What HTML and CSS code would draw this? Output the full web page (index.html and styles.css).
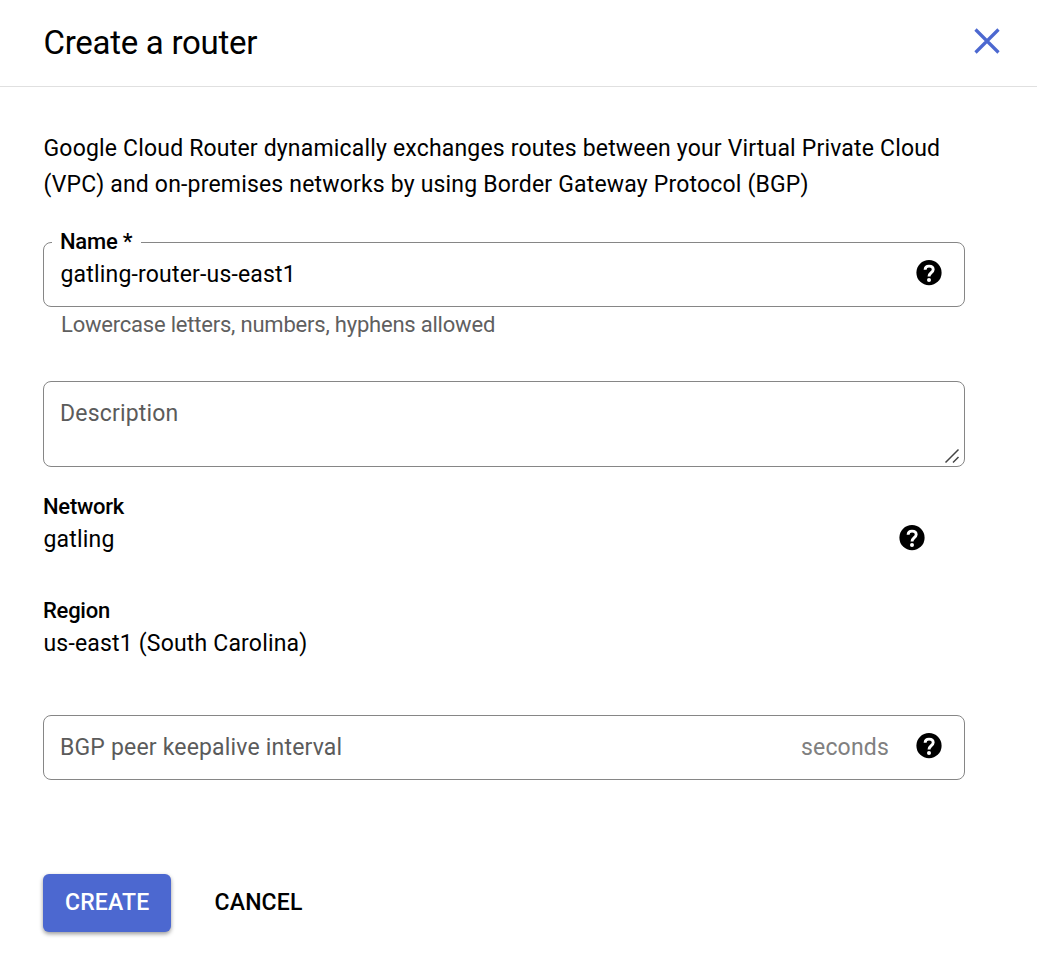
FILE: index.html
```html
<!DOCTYPE html>
<html lang="en">
<head>
<meta charset="utf-8">
<title>Create a router</title>
<link rel="stylesheet" href="styles.css">
</head>
<body>
<svg class="defs" width="0" height="0"><symbol id="help" viewBox="0 0 26 26"><circle cx="13" cy="12.700" r="12.600"/><path d="M9.100 9.800C9.200 7.200 10.800 6.100 13 6.100c2.500 0 4.200 1.300 4.200 3.500 0 3-4.200 3.300-4.200 6.900" fill="none" stroke="#fff" stroke-width="2.900"/><circle cx="13" cy="20.100" r="2" fill="#fff"/></symbol></svg>
<header class="header">
  <h1 class="title">Create a router</h1>
  <svg class="close" viewBox="0 0 26 26"><path d="M1.500 1.500l23 23M24.500 1.500l-23 23"/></svg>
</header>
<main class="content">
  <p class="intro">Google Cloud Router dynamically exchanges routes between your Virtual Private Cloud<br>(VPC) and on-premises networks by using Border Gateway Protocol (BGP)</p>
  <fieldset class="field name">
    <legend class="legend">Name *</legend>
    <span class="value">gatling-router-us-east1</span>
    <svg class="help"><use href="#help"/></svg>
  </fieldset>
  <p class="hint">Lowercase letters, numbers, hyphens allowed</p>
  <div class="field description">
    <span class="placeholder">Description</span>
    <svg class="grip" viewBox="0 0 16 16"><path d="M1.500 14.500L14.500 1.500M9 14.500l5.500-5.500"/></svg>
  </div>
  <section class="info network">
    <div><h2 class="label">Network</h2><p class="data">gatling</p></div>
    <svg class="help"><use href="#help"/></svg>
  </section>
  <section class="info">
    <div><h2 class="label">Region</h2><p class="data">us-east1 (South Carolina)</p></div>
  </section>
  <div class="field interval">
    <span class="placeholder">BGP peer keepalive interval</span>
    <span class="unit">seconds</span>
    <svg class="help"><use href="#help"/></svg>
  </div>
  <div class="actions">
    <button class="button create">CREATE</button>
    <button class="button cancel">CANCEL</button>
  </div>
</main>
</body>
</html>
```
FILE: styles.css
```css
* { box-sizing: border-box; }
body { margin: 0; background: #fff; color: #000; font-family: Roboto, sans-serif; font-size: 23px; letter-spacing: .18px; }
h1, h2, p { margin: 0; white-space: nowrap; }
.defs { display: block; }
.header { display: flex; justify-content: space-between; align-items: center; height: 87px; padding: 0 37.5px 3px 43.5px; border-bottom: 1px solid #e0e0e0; }
.title { padding-top: 2px; font-size: 33px; font-weight: 400; line-height: 40px; letter-spacing: -.28px; }
.close { width: 26px; height: 26px; margin-bottom: 1px; fill: none; stroke: #4c68d0; stroke-width: 3.2; }
.content { width: 965px; min-height: 893px; padding: 44px 0 0 43px; }
.intro { height: 104px; padding-left: .5px; line-height: 36px; }
.field { display: flex; align-items: center; width: 922px; height: 65px; margin: 0; padding: 0 22px 0 16px; border: 1px solid #868686; border-radius: 8px; }
.name { height: 72px; padding: 0 22px 9px 8px; }
.legend { padding: 0 9px 0 8px; font-size: 22px; font-weight: 500; line-height: 14px; letter-spacing: -.25px; }
.value { flex: 1; padding: 3px 0 0 8.5px; }
.help { width: 26px; height: 26px; flex: none; }
.hint { height: 74px; padding-left: 18px; font-size: 22px; line-height: 36px; letter-spacing: -.21px; color: #5f5f5f; }
.description { height: 86px; align-items: flex-start; justify-content: space-between; padding: 14px 4px 2px 16px; }
.placeholder { flex: 1; line-height: 36px; color: #5b5b5b; }
.grip { width: 16px; height: 16px; align-self: flex-end; fill: none; stroke: #444; stroke-width: 1.5; }
.info { display: flex; justify-content: space-between; align-items: flex-start; height: 104px; padding-top: 24px; line-height: 32px; }
.label { font-size: 22px; font-weight: 500; letter-spacing: -.25px; }
.data { padding: 1px 0 0 .5px; }
.network .help { margin-top: 34px; }
.network { padding-right: 40px; }
.interval { margin-top: 40px; }
.interval .help { margin-bottom: 4px; }
.unit { margin-right: 27px; color: #808080; }
.actions { display: flex; gap: 21.5px; margin-top: 94px; }
.button { height: 58px; border: 0; border-radius: 6px; padding: 0 22px 2px; background: none; color: #000; font: 500 23px Roboto, sans-serif; letter-spacing: .18px; }
.create { width: 128px; background: #4c68d0; color: #fff; box-shadow: 0 2px 4px rgba(0,0,0,.4); }
```
